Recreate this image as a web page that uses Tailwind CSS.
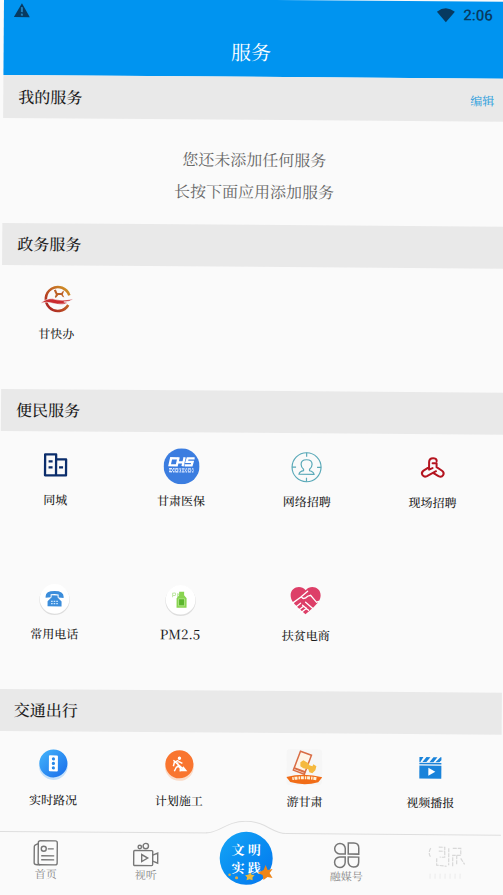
<!DOCTYPE html>
<html lang="zh-CN">
<head>
<meta charset="utf-8">
<meta name="viewport" content="width=device-width, initial-scale=1">
<title>服务</title>
<script src="https://cdn.jsdelivr.net/npm/@tailwindcss/browser@4"></script>
</head>
<body class="min-h-screen overflow-hidden bg-[#fafafa] font-['Noto_Serif_CJK_SC','Noto_Sans_CJK_SC',serif] text-[#1c1c1c]">
<div class="-mt-0.5 ml-1 flex min-h-screen w-full origin-top-left rotate-[0.42deg] flex-col">
  <header class="h-[77px] bg-[#0094f0]">
    <div class="flex h-7 items-center justify-between pl-2.5 pr-3.5 text-[#073a61]">
      <svg class="mb-1 h-4 w-4" viewBox="0 0 16 16" role="img" aria-label="警告"><path d="M8 1 16 15H0Z" fill="currentColor"/><path d="M8 5v5M8 11.500v2" stroke="#2380bb" stroke-width="2"/></svg>
      <div class="flex items-center gap-2">
        <svg class="h-4 w-[18px]" viewBox="0 0 18 16" role="img" aria-label="无线网络"><path d="M0 4.500Q9-2.500 18 4.500L9 15Z" fill="currentColor"/></svg>
        <time class="font-['Roboto',sans-serif] text-[15px] font-medium leading-5">2:06</time>
      </div>
    </div>
    <h1 class="pr-2 text-center text-xl leading-[48px] text-white">服务</h1>
  </header>
  <main class="grow">
    <section>
      <div class="flex h-[43px] items-center justify-between bg-[#e9e9e9] pl-[15px] pr-3">
        <h2 class="text-base font-medium leading-6">我的服务</h2>
        <button type="button" class="text-xs leading-5 text-[#2199dc]">编辑</button>
      </div>
      <p class="h-[105px] pt-6 text-center text-base leading-8 text-[#666666]">您还未添加任何服务<br>长按下面应用添加服务</p>
    </section>
    <section>
      <h2 class="h-[42px] bg-[#e9e9e9] px-[15px] text-base font-medium leading-[42px]">政务服务</h2>
      <div class="grid h-[124px] grid-cols-4 gap-x-4 pr-4 text-center text-xs font-medium leading-4">
        <a href="#gankuaiban" class="flex flex-col items-center gap-2 pt-4">
          <svg class="h-9 w-9" viewBox="0 0 36 36" aria-hidden="true"><defs><linearGradient id="ring" x1="0" y1="1" x2="1" y2="0"><stop offset="0" stop-color="#a81723"/><stop offset="1" stop-color="#d39a25"/></linearGradient></defs><path d="M29.500 23.500A12 12 0 1 1 30.500 14" fill="none" stroke="url(#ring)" stroke-width="2.600"/><path d="M2 22Q8 16.500 14 17.500 22 20 34 17.500 32 20 25 20.500 31 21 26 22.500 18 23.500 12 21.500 8 20 2 22Z" fill="#ca2b2f" stroke="#fafafa" stroke-width=".6"/><path d="m15 9 2-1 1.500 3.500h4l2-2.500.5 1-1 3 1.500 3-2-1-1-1.500h-3L17 16.500l-1-1 1-2.500-1-2Z" fill="#bd6228"/></svg>
          <span>甘快办</span>
        </a>
      </div>
    </section>
    <section>
      <h2 class="h-[42px] bg-[#e9e9e9] px-[15px] text-base font-medium leading-[42px]">便民服务</h2>
      <div class="grid h-[258px] grid-cols-4 grid-rows-2 gap-x-4 gap-y-[10px] pr-4 text-center text-xs font-medium leading-4">
        <a href="#tongcheng" class="flex flex-col items-center gap-2 pt-4">
          <svg class="h-9 w-9" viewBox="0 0 36 36" fill="none" stroke="#0b2d6b" stroke-width="2.300" stroke-linejoin="round" aria-hidden="true"><path d="M7.500 7h11v21h-11ZM18.500 12h10v16h-10"/><path d="M11 14h4M11 20h4M21.500 20h4" stroke-width="2.200"/></svg>
          <span>同城</span>
        </a>
        <a href="#yibao" class="flex flex-col items-center gap-2 pt-4">
          <svg class="h-9 w-9" viewBox="0 0 36 36" aria-hidden="true"><circle cx="18" cy="18" r="18" fill="#3b7de0"/><path d="M14 10H7.500L6 17h7M15 9l-2 9M21 9l-2 9M14 14h6M31 10h-7l-1 3.500h6L28 17h-7" fill="none" stroke="#fff" stroke-width="2.300"/><path d="M5.500 20.500h25M5.500 23.500h25" stroke="#dbe8ff" stroke-width="1.300" stroke-dasharray="3 1 1.500 .8"/><path d="M6 22h24" stroke="#dbe8ff" stroke-width="1.800" stroke-dasharray="1 1.600"/></svg>
          <span>甘肃医保</span>
        </a>
        <a href="#wangluo" class="flex flex-col items-center gap-2 pt-4">
          <svg class="h-9 w-9" viewBox="0 0 36 36" fill="none" stroke="#5aa9b8" stroke-width="1.200" aria-hidden="true"><circle cx="18" cy="18" r="14.500"/><path d="M18 3.500v4M18 28.500v4M3.500 18h4M28.500 18h4M15 20q-2.500-2-2.500-5c0-3 2-4.500 5.500-4.500s5.500 1.500 5.500 4.500q0 3-2.500 5v1.500q4 .8 4.500 3.500h-15q.5-2.700 4.500-3.500Z"/></svg>
          <span>网络招聘</span>
        </a>
        <a href="#xianchang" class="flex flex-col items-center gap-2 pt-4">
          <svg class="h-9 w-9" viewBox="0 0 36 36" fill="none" stroke="#b4141f" stroke-width="2" stroke-linecap="round" stroke-linejoin="round" aria-hidden="true"><path d="M22 11v-1q-.5-2-3.500-2-4 0-4 4v5L9 20.500c-3.500 2.500-.5 7.500 3.500 5.500l9-5M18 13h4v4l5.500 3.500c3.500 2.500.5 7.500-3.500 5.500l-5-3M14.500 17v2.500l3.500-1.500"/></svg>
          <span>现场招聘</span>
        </a>
        <a href="#dianhua" class="flex flex-col items-center gap-2 pt-4">
          <svg class="h-9 w-9" viewBox="0 0 36 36" aria-hidden="true"><circle cx="18" cy="18.500" r="15.200" fill="#dedede"/><circle cx="18" cy="17.500" r="14.800" fill="#fff"/><path d="M9 15q0-5.500 9-5.500t9 5.500v1.500l-5-.5v-3q-4-1-8 0v3l-5 .5Z" fill="#3b8ddb"/><path d="M15 14h6v2l4 4v5H11v-5l4-4Z" fill="#3b8ddb"/><path d="M14.500 20h7M14.500 22.200h7" stroke="#cce7ff" stroke-width="1.300" stroke-dasharray="1.600 1"/></svg>
          <span>常用电话</span>
        </a>
        <a href="#pm25" class="flex flex-col items-center gap-2 pt-4">
          <svg class="h-9 w-9" viewBox="0 0 36 36" aria-hidden="true"><circle cx="18" cy="18.500" r="15.200" fill="#dedede"/><circle cx="18" cy="17.500" r="14.800" fill="#fff"/><path d="M10 15v-4q3-1 3 1t-3 1M15 11v4m0-4 1.500 2" fill="none" stroke="#bfe7a5" stroke-width="1"/><path d="M16.500 9.500h5v3.500l2.500 3v9.500H14V16l2.500-3Z" fill="#89d451"/><path d="M16 16.500h6v7h-6Z" fill="#5bb62d" stroke="#c5f1a1" stroke-width=".7"/></svg>
          <span class="text-[13px] leading-4">PM2.5</span>
        </a>
        <a href="#fupin" class="flex flex-col items-center gap-2 pt-4">
          <svg class="h-9 w-9" viewBox="0 0 36 36" aria-hidden="true"><path d="M18 7C13 1 3 4 3 12c0 5 3 8 7 12l8 7 8-7c4-4 7-7 7-12 0-8-10-11-15-5Z" fill="#dd3f68"/><path d="m5 20 8-6 7-6m-6 6q2 3 6-1l3-1 6 7 2-1M18 19l7 6M15 22l6 5M8 24l5-4M11 27l5-4M14 29l5-4" fill="none" stroke="#fff" stroke-width="1.300" stroke-linecap="round"/></svg>
          <span>扶贫电商</span>
        </a>
      </div>
    </section>
    <section>
      <h2 class="h-[42px] bg-[#e9e9e9] px-[15px] text-base font-medium leading-[42px]">交通出行</h2>
      <div class="grid h-[100px] grid-cols-4 gap-x-4 pr-4 text-center text-xs font-medium leading-4">
        <a href="#lukuang" class="flex flex-col items-center gap-2 pt-4">
          <svg class="h-9 w-9" viewBox="0 0 36 36" aria-hidden="true"><defs><linearGradient id="road" x1="0" y1="0" x2="1" y2="1"><stop stop-color="#45b6fb"/><stop offset="1" stop-color="#176bea"/></linearGradient></defs><circle cx="18" cy="18" r="14.500" fill="#c5e1fa"/><circle cx="18" cy="16" r="14" fill="url(#road)"/><rect x="13.500" y="8" width="9" height="16" rx="1" fill="#fff"/><g fill="#2688e9"><circle cx="18" cy="11.500" r="1.600"/><circle cx="18" cy="16" r="1.600"/><circle cx="18" cy="20.500" r="1.600"/></g></svg>
          <span>实时路况</span>
        </a>
        <a href="#shigong" class="flex flex-col items-center gap-2 pt-4">
          <svg class="h-9 w-9" viewBox="0 0 36 36" aria-hidden="true"><circle cx="18" cy="18" r="14.500" fill="#fadbc8"/><circle cx="18" cy="16" r="14" fill="#f9752f"/><circle cx="18" cy="10" r="1.700" fill="#fff"/><path d="m17 12-4 2-1 4m4-4 1 4-2 1-2 4m4-5 2 2v3M12 12l9 8m-4-7 4 2" fill="none" stroke="#fff" stroke-width="1.500" stroke-linejoin="round"/><path d="m18 23 4-5 4 5Z" fill="#fff"/></svg>
          <span>计划施工</span>
        </a>
        <a href="#yougansu" class="flex flex-col items-center gap-2 pt-4">
          <svg class="h-9 w-9" viewBox="0 0 36 36" aria-hidden="true"><rect width="36" height="36" rx="4" fill="#f6f6f6"/><path d="m14 2 11 4-7 19-11-4Z" fill="#fff5e7" stroke="#d96d45" stroke-width="1.500"/><path d="m8 19 11 4" stroke="#d96d45" stroke-width="2"/><path d="m14 13 3-2 5 3 1 2 3 1 1-2 3 2-1 4-3 3-3-1-1-3-5-1-3-2Z" fill="#f5b93f"/><path d="M0 28q18-5 36 0l-4 5q-14 4-28 0Z" fill="#f16d18"/><path d="M6 29.500q12-2 25 0" fill="none" stroke="#fff1d7" stroke-width="3" stroke-dasharray="1.500 .8 3 1"/></svg>
          <span>游甘肃</span>
        </a>
        <a href="#shipin" class="flex flex-col items-center gap-2 pt-4">
          <svg class="h-9 w-9" viewBox="0 0 36 36" aria-hidden="true"><path d="M7 15.500h22v13H7Z" fill="#1983da"/><path d="M7 7h4l-3 5H7ZM14 7h4l-4 5h-4ZM21 7h4l-4 5h-4ZM28 7h1v3l-2 2h-4Z" fill="#1983da"/><path d="M7 13.500h22" stroke="#1983da" stroke-width="1.500"/><path d="m16 17.500 7 4-7 4Z" fill="#fff"/></svg>
          <span>视频播报</span>
        </a>
      </div>
    </section>
  </main>
  <nav aria-label="主导航" class="relative -ml-0.5 grid h-[77px] grid-cols-5 border-t border-[#dedede] bg-[#fafafa] pr-1 text-center text-[11px] leading-3 text-[#888888]">
    <a href="#home" class="flex flex-col items-center pt-[7px]">
      <svg class="h-7 w-7" viewBox="0 0 28 28" fill="none" stroke="#777" stroke-width="1.400" aria-hidden="true"><rect x="6.500" y="1.500" width="19" height="24" rx="2"/><path d="M6.500 4.500q-4 1-4 3v16q0 2 3 2h3M9.500 16.500h13M9.500 20.500h13M16 9.500h6"/><circle cx="12" cy="9.500" r="2.500"/></svg>
      <span>首页</span>
    </a>
    <a href="#video" class="flex flex-col items-center pt-[7px]">
      <svg class="h-7 w-7" viewBox="0 0 28 28" fill="none" stroke="#777" stroke-width="1.400" aria-hidden="true"><rect x="2" y="10.500" width="19" height="15" rx="1"/><path d="m21 15 5-2v10l-5-2M10 14.500v7l6-3.500Z"/><circle cx="8" cy="7" r="1.700"/><circle cx="14" cy="6" r="2.700"/></svg>
      <span>视听</span>
    </a>
    <a href="#practice" class="relative flex justify-center">
      <svg class="absolute -top-[13px] h-[15px] w-20" viewBox="0 0 80 15" aria-hidden="true"><path d="M0 12.500C14 12.500 20 .5 40 .5S66 12.500 80 12.500V15H0Z" fill="#fafafa"/><path d="M0 12.500C14 12.500 20 .5 40 .5S66 12.500 80 12.500" fill="none" stroke="#dedede"/></svg>
      <span class="relative -mt-0.5 flex h-[53px] w-[53px] items-center justify-center rounded-full bg-linear-to-br from-[#16a5f5] to-[#0875ee] text-center text-[13px] font-bold leading-[18px] text-white">文 明<br>实 践</span>
      <svg class="absolute top-7 h-5 w-[60px]" viewBox="0 0 60 20" aria-hidden="true"><path d="m50 3 2 5 5-1-3 4 3 5-5-1-4 3-1-5-5-2 6-3Z" fill="#ee8518"/><path d="m35 11 1 2 3 .5-2 2v3l-3-1-3 1 .5-3-2-2 3-.5Z" fill="#e9b83d"/><circle cx="14" cy="13" r="1.300" fill="#e0aa43"/><circle cx="21" cy="16" r="1.600" fill="#e0aa43"/></svg>
    </a>
    <a href="#media" class="flex flex-col items-center pt-[7px]">
      <svg class="h-7 w-7" viewBox="0 0 28 28" fill="none" stroke="#777" stroke-width="1.500" aria-hidden="true"><path d="M12.500 12.500H7a5.300 5.300 0 1 1 5.500-5.500ZM15.500 12.500V1.500H21q5 0 5 5v6ZM12.500 15.500V21A5.300 5.300 0 1 1 7 15.500ZM15.500 15.500H26v5q0 5-5 5a5.300 5.300 0 0 1-5.500-5.500Z"/></svg>
      <span>融媒号</span>
    </a>
    <a href="#mine" aria-label="我的" class="flex flex-col items-center pt-2">
      <svg class="h-10 w-10" viewBox="0 0 40 40" fill="none" stroke="#d8d8d8" stroke-width="1.200" aria-hidden="true"><path d="M4 5q-3 5 0 9M12 4h6v10h-5M12 8h6M10 15v7l10 1M22 5v17M26 5h8v7h-8v11M30 12v10M34 15l4 6" stroke-dasharray="4 1"/><path d="M3 33h34" stroke="#ebebeb" stroke-width="5" stroke-dasharray="1 4"/></svg>
    </a>
  </nav>
</div>
</body>
</html>
